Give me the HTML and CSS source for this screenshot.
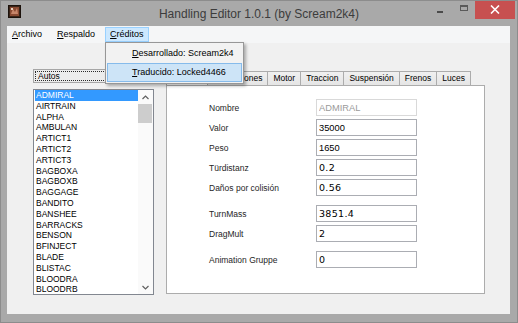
FILE: index.html
```html
<!DOCTYPE html>
<html>
	<head>
		<meta charset="UTF-8">
		<title>Handling Editor 1.0.1</title>
		<link rel="stylesheet" href="styles.css">
	</head>
	<body>
		<div class="window">
			<div class="titlebar">
				<div class="tb-left">
					<svg class="app-icon" width="13" height="13" viewBox="0 0 13 13">
						<rect x="0.5" y="0.5" width="12" height="12" fill="#3a2418" stroke="#1c120c"/>
						<rect x="2" y="2" width="9" height="9" fill="#8a4a32"/>
						<path d="M3 9 L5 4 L7 7 L9 3 L10 9 Z" fill="#c8866a"/>
						<rect x="3" y="3" width="2" height="2" fill="#e8d2c0"/>
					</svg>
				</div>
				<div class="tb-title">Handling Editor 1.0.1 (by Scream2k4)</div>
				<div class="tb-buttons">
					<span class="btn btn-min"><i></i></span>
					<span class="btn btn-max"><i></i></span>
					<span class="btn btn-close">
						<svg width="10" height="9" viewBox="0 0 10 9">
							<path d="M1 0.5 L9 8.5 M9 0.5 L1 8.5" stroke="#fff" stroke-width="1.6"/>
						</svg>
					</span>
				</div>
			</div>

			<div class="client">
				<ul class="menubar">
					<li><u>A</u>rchivo</li>
					<li><u>R</u>espaldo</li>
					<li class="open"><u>C</u>réditos
						<ul class="dropdown">
							<li><u>D</u>esarrollado: Scream2k4</li>
							<li class="hover"><u>T</u>raducido: Locked4466</li>
						</ul>
					</li>
				</ul>

				<div class="main">
					<div class="side">
						<div class="combo"><span class="focus">Autos</span></div>
						<div class="listbox">
							<ul class="items">
								<li class="selected">ADMIRAL</li>
								<li>AIRTRAIN</li>
								<li>ALPHA</li>
								<li>AMBULAN</li>
								<li>ARTICT1</li>
								<li>ARTICT2</li>
								<li>ARTICT3</li>
								<li>BAGBOXA</li>
								<li>BAGBOXB</li>
								<li>BAGGAGE</li>
								<li>BANDITO</li>
								<li>BANSHEE</li>
								<li>BARRACKS</li>
								<li>BENSON</li>
								<li>BFINJECT</li>
								<li>BLADE</li>
								<li>BLISTAC</li>
								<li>BLOODRA</li>
								<li>BLOODRB</li>
							</ul>
							<div class="vscroll">
								<span class="arrow">
									<svg width="7" height="5" viewBox="0 0 7 5"><path d="M0.5 4 L3.5 1 L6.5 4" fill="none" stroke="#606060" stroke-width="1.2"/></svg>
								</span>
								<span class="thumb"></span>
								<span class="track"></span>
								<span class="arrow">
									<svg width="7" height="5" viewBox="0 0 7 5"><path d="M0.5 1 L3.5 4 L6.5 1" fill="none" stroke="#606060" stroke-width="1.2"/></svg>
								</span>
							</div>
						</div>
					</div>

					<div class="tabs">
						<ul class="tabstrip">
							<li class="active">General</li>
							<li>Dimensiones</li>
							<li>Motor</li>
							<li>Traccion</li>
							<li>Suspensión</li>
							<li>Frenos</li>
							<li>Luces</li>
						</ul>
						<div class="panel">
							<div class="group">
								<label>Nombre</label><input class="field readonly" type="text" value="ADMIRAL">
								<label>Valor</label><input class="field" type="text" value="35000">
								<label>Peso</label><input class="field" type="text" value="1650">
								<label>Türdistanz</label><input class="field float" type="text" value="0.2">
								<label>Daños por colisión</label><input class="field float" type="text" value="0.56">
							</div>
							<div class="group">
								<label>TurnMass</label><input class="field float" type="text" value="3851.4">
								<label>DragMult</label><input class="field float" type="text" value="2">
							</div>
							<div class="group last">
								<label>Animation Gruppe</label><input class="field float" type="text" value="0">
							</div>
						</div>
					</div>
				</div>
			</div>
		</div>
	</body>
</html>
```

FILE: styles.css
```css
body {
	margin: 0;
	font-family: "Liberation Sans", Arial, sans-serif;
	background: #a8a8a8;
}

.window {
	width: 518px;
	height: 323px;
	box-sizing: border-box;
	background: #a9a9a9;
	border: 1px solid #8c8c8c;
	display: flex;
	flex-direction: column;
	overflow: hidden;
}

/* barra de titulo */
.titlebar {
	height: 25px;
	display: grid;
	grid-template-columns: 1fr auto 1fr;
	align-items: center;
}

.tb-left {
	align-self: start;
	padding: 4px 0 0 7px;
}

.app-icon {
	display: block;
}

.tb-title {
	font-size: 12px;
	color: #3c3c3c;
	padding-top: 1px;
}

.tb-buttons {
	justify-self: end;
	align-self: start;
	display: flex;
	gap: 1px;
	margin: -1px 2px 0 0;
}

.btn {
	height: 19px;
	display: flex;
	justify-content: center;
}

.btn-min {
	width: 24px;
	align-items: flex-end;
	padding-bottom: 6px;
	box-sizing: border-box;
}

.btn-min i {
	display: block;
	width: 6px;
	height: 2px;
	background: #4a4a4a;
}

.btn-max {
	width: 21px;
	align-items: center;
	padding-bottom: 3px;
	box-sizing: border-box;
}

.btn-max i {
	display: block;
	width: 8px;
	height: 6px;
	box-sizing: border-box;
	border: 1px solid #5a5a5a;
	border-top-width: 2px;
}

.btn-close {
	width: 40px;
	align-items: center;
	background: #c75050;
}

.btn-close svg {
	display: block;
}

/* area cliente */
.client {
	flex: 1;
	margin: 0 7px 8px 6px;
	background: #f0f0f0;
	display: flex;
	flex-direction: column;
	position: relative;
}

.menubar {
	list-style: none;
	margin: 0;
	padding: 1px 0;
	height: 17px;
	box-sizing: border-box;
	display: flex;
	gap: 5px;
	background: #f5f6f7;
}

.menubar > li {
	position: relative;
	font-size: 9px;
	line-height: 13px;
	padding: 0 4px;
	border: 1px solid transparent;
	color: #000;
}

.menubar > li.open {
	background: #cce8ff;
	border-color: #99d1ff;
}

.dropdown {
	position: absolute;
	left: -1px;
	top: 14px;
	z-index: 10;
	width: 139px;
	box-sizing: border-box;
	list-style: none;
	margin: 0;
	padding: 1px;
	background: #f2f2f2;
	border: 1px solid #979797;
	box-shadow: 2px 2px 3px rgba(0, 0, 0, 0.3);
}

.dropdown li {
	height: 19px;
	line-height: 17px;
	box-sizing: border-box;
	padding-left: 24px;
	border: 1px solid transparent;
	white-space: nowrap;
}

.dropdown li.hover {
	background: #cde4f7;
	border-color: #86bbeb;
}

.main {
	display: flex;
	align-items: flex-start;
	padding: 26px 25px 0 26px;
}

/* lista de vehiculos */
.side {
	width: 121px;
	display: flex;
	flex-direction: column;
	gap: 6px;
}

.combo {
	height: 14px;
	box-sizing: border-box;
	border: 1px solid #a6a6a6;
	background: #ececec;
	padding: 1px;
}

.combo .focus {
	display: block;
	height: 100%;
	box-sizing: border-box;
	border: 1px dotted #2a2a2a;
	padding-left: 2px;
	font-size: 8.5px;
	line-height: 8px;
}

.listbox {
	height: 206px;
	box-sizing: border-box;
	border: 1px solid #828790;
	background: #fff;
	display: flex;
}

.items {
	flex: 1;
	list-style: none;
	margin: 0;
	padding: 0 0 0 1px;
	overflow: hidden;
}

.items li {
	font-size: 8.5px;
	line-height: 10.8px;
	padding-left: 1px;
	color: #000;
	white-space: nowrap;
}

.items li.selected {
	background: #3399ff;
	color: #fff;
}

.vscroll {
	width: 15px;
	display: flex;
	flex-direction: column;
	background: #fafafa;
}

.vscroll .arrow {
	height: 14px;
	display: flex;
	justify-content: center;
	align-items: center;
}

.vscroll .thumb {
	height: 19px;
	margin: 0 1px 0 0;
	background: #cdcdcd;
}

.vscroll .track {
	flex: 1;
}

/* pestañas */
.tabs {
	flex: 1;
	margin: 2px 0 0 12px;
	display: flex;
	flex-direction: column;
}

.tabstrip {
	list-style: none;
	margin: 0;
	padding: 0;
	height: 14px;
	display: flex;
	align-items: flex-end;
}

.tabstrip li {
	height: 14px;
	box-sizing: border-box;
	border: 1px solid #acacac;
	border-bottom: none;
	margin-right: -1px;
	padding: 0 5px;
	font-size: 8.5px;
	line-height: 12px;
	background: linear-gradient(#f0f0f0, #e5e5e5);
	white-space: nowrap;
}

.tabstrip li.active {
	background: #fff;
}

.panel {
	height: 209px;
	box-sizing: border-box;
	border: 1px solid #acacac;
	background: #fff;
	padding: 13px 0 0 42px;
}

.group {
	display: grid;
	grid-template-columns: 107px 101px;
	grid-auto-rows: 17px;
	row-gap: 3px;
	align-items: center;
	margin-bottom: 9px;
}

.group label {
	font-size: 8.5px;
	color: #262626;
	white-space: nowrap;
}

.field {
	width: 101px;
	height: 17px;
	box-sizing: border-box;
	margin: 0;
	border: 1px solid #abadb3;
	padding: 0 2px;
	font-family: "Liberation Sans", Arial, sans-serif;
	font-size: 9.3px;
	color: #000;
	background: #fff;
	outline: none;
}

.field.readonly {
	border-color: #d9d9d9;
	color: #9a9a9a;
}

.field.float {
	font-family: "DejaVu Sans", sans-serif;
	font-size: 9.5px;
	letter-spacing: 0.3px;
}
```
